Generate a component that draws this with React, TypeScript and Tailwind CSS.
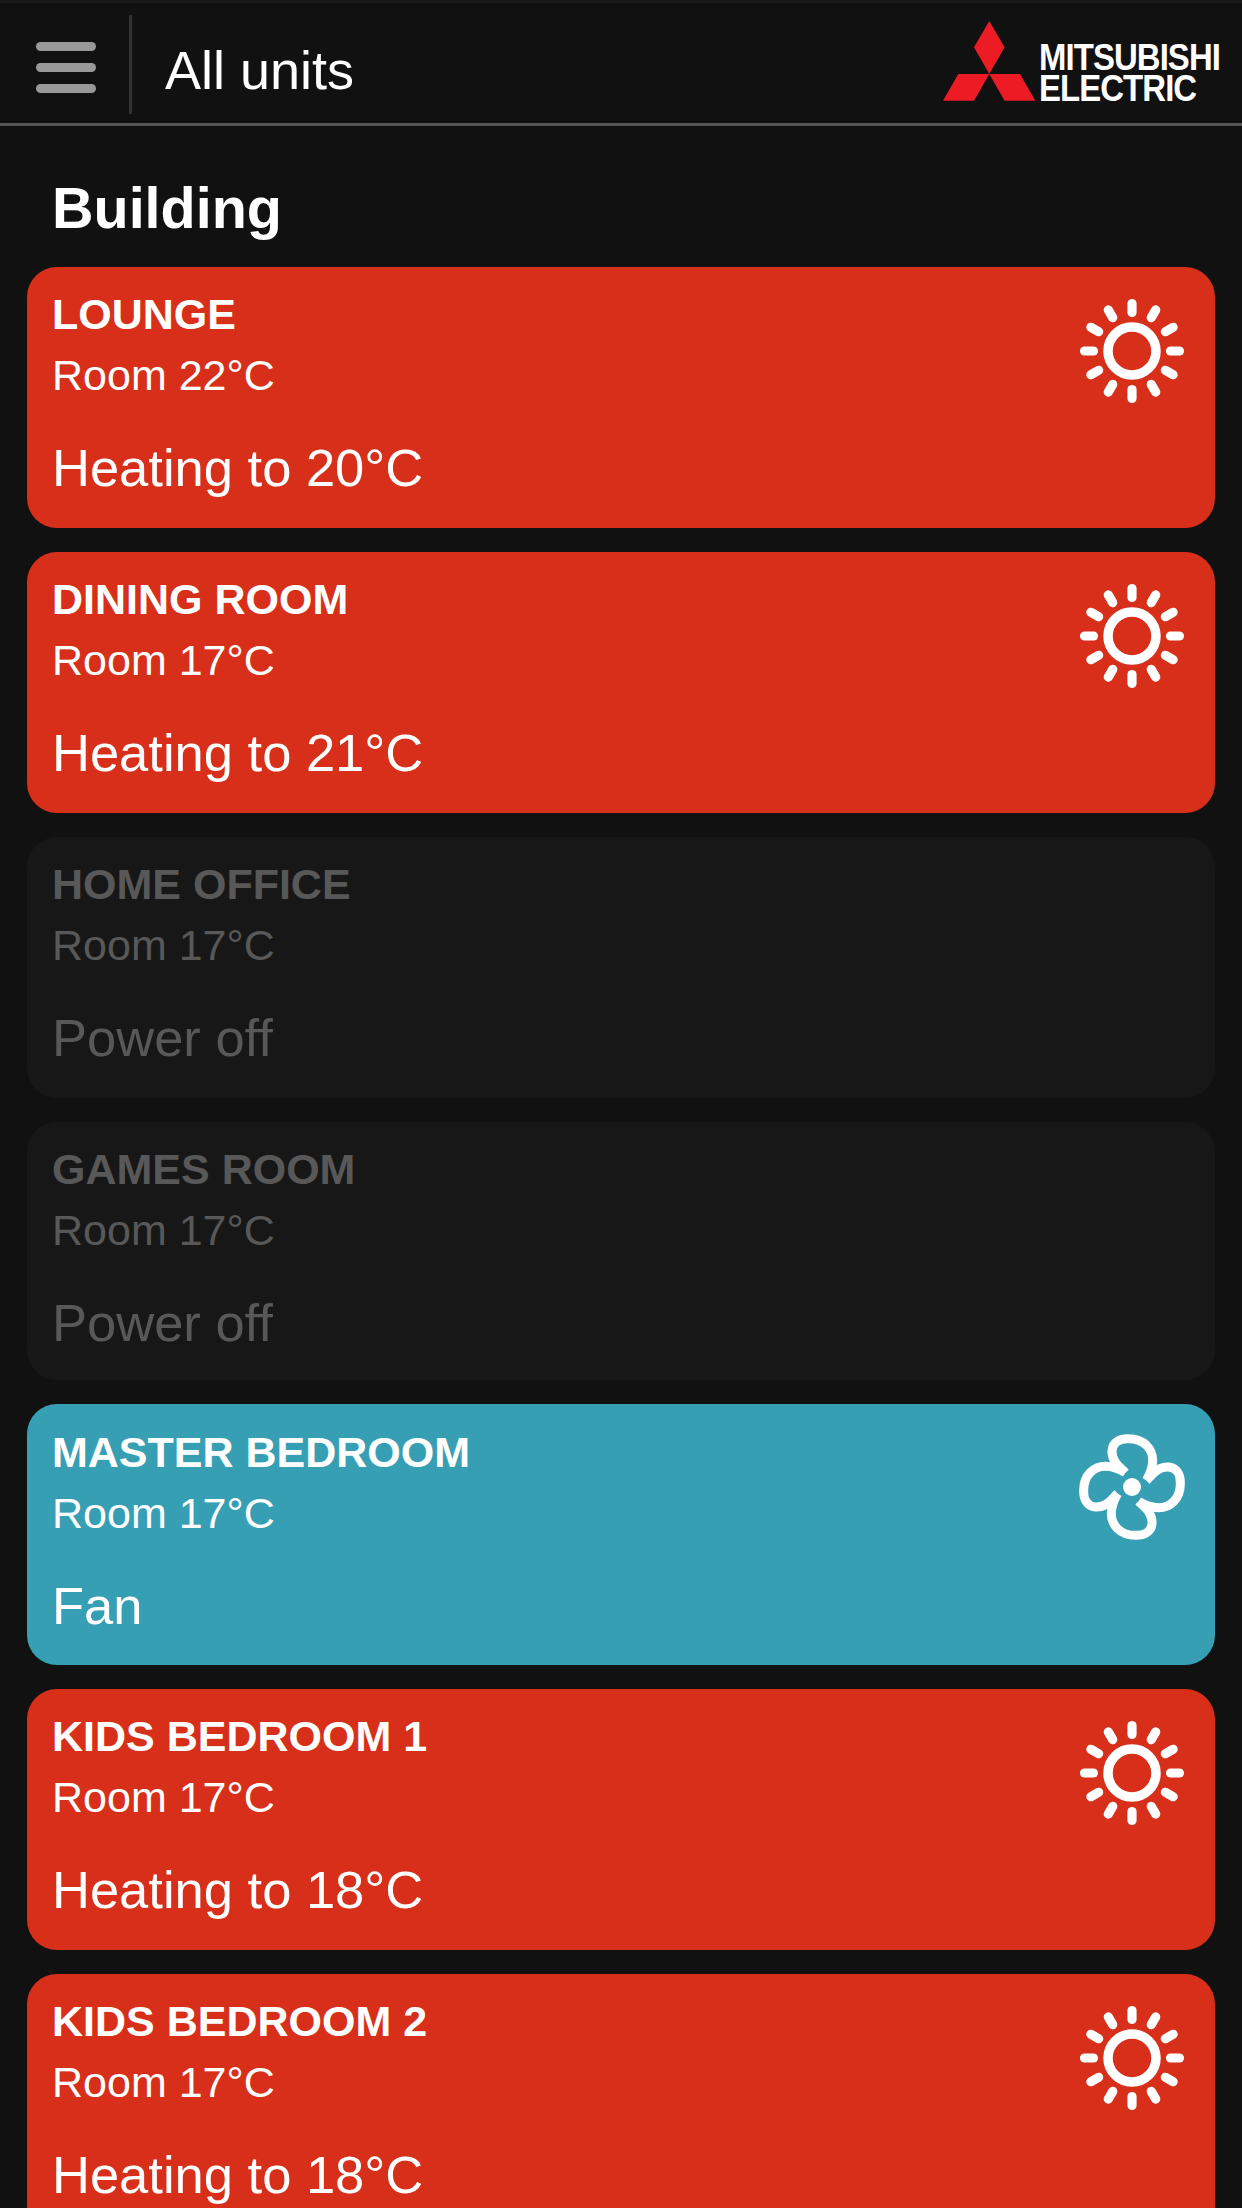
import React from 'react';

type Mode = 'heat' | 'off' | 'fan';

const units: { name: string; room: string; status: string; mode: Mode; short?: boolean }[] = [
  { name: 'LOUNGE', room: 'Room 22°C', status: 'Heating to 20°C', mode: 'heat' },
  { name: 'DINING ROOM', room: 'Room 17°C', status: 'Heating to 21°C', mode: 'heat' },
  { name: 'HOME OFFICE', room: 'Room 17°C', status: 'Power off', mode: 'off' },
  { name: 'GAMES ROOM', room: 'Room 17°C', status: 'Power off', mode: 'off', short: true },
  { name: 'MASTER BEDROOM', room: 'Room 17°C', status: 'Fan', mode: 'fan' },
  { name: 'KIDS BEDROOM 1', room: 'Room 17°C', status: 'Heating to 18°C', mode: 'heat' },
  { name: 'KIDS BEDROOM 2', room: 'Room 17°C', status: 'Heating to 18°C', mode: 'heat' },
];

const SunIcon = () => (
  <svg width="106" height="106" viewBox="-53 -53 106 106" fill="none" stroke="white" strokeLinecap="round">
    <circle r="24" strokeWidth="9.5" />
    {[0, 30, 60, 90, 120, 150, 180, 210, 240, 270, 300, 330].map((a) => (
      <line key={a} x1="0" y1="-38.5" x2="0" y2="-47.5" strokeWidth="9.2" transform={`rotate(${a})`} />
    ))}
  </svg>
);

const FanIcon = () => (
  <svg width="110" height="110" viewBox="-165 -165 330 330" fill="none" stroke="white">
    <circle r="27" fill="white" stroke="none" />
    {[0, 90, 180, 270].map((a) => (
      <path
        key={a}
        strokeWidth="27"
        strokeLinejoin="round"
        transform={`rotate(${a})`}
        d="M-20,-43 C-35,-60 -62,-75 -60,-110 C-58,-135 -35,-146 -10,-145 C35,-145 62,-115 62,-80 C62,-55 52,-35 43,-20"
      />
    ))}
  </svg>
);

const Logo = () => (
  <div className="flex items-end gap-[3px] mt-[-6px]">
    <svg width="93" height="80" viewBox="0 0 93 80" className="mb-[-1px]">
      <path fill="#ed1c24" d="M46.3 0 L61.6 26.3 L46.3 53 L31 26.3 Z M46.3 53 L31 79.7 L0 79.7 L15.3 53 Z M46.3 53 L77 53 L92.3 79.7 L61.6 79.7 Z" />
    </svg>
    <div className="w-[181px] flex flex-col font-bold text-white text-[36px] leading-[31.5px] tracking-[-1px] whitespace-nowrap origin-left scale-x-[0.914] mb-[-5px]">
      <span>MITSUBISHI</span>
      <span>ELECTRIC</span>
    </div>
  </div>
);

const UnitCard = ({ name, room, status, mode, short }: (typeof units)[number]) => {
  const bg = mode === 'heat' ? 'bg-[#d72f19]' : mode === 'fan' ? 'bg-[#379fb4]' : 'bg-[#171717]';
  const text = mode === 'off' ? 'text-[#585858]' : 'text-white';
  const pad = short ? 'pt-[17px] pb-[24px]' : mode === 'fan' ? 'pt-[18px] pb-[26px]' : 'pt-[17px] pb-[27px]';
  return (
    <div className={`flex justify-between rounded-[30px] pl-[25px] pr-[30px] ${pad} ${bg} ${text}`}>
      <div className="flex flex-col">
        <div className="text-[43px] leading-[61px] font-bold">{name}</div>
        <div className="text-[43px] leading-[61px]">{room}</div>
        <div className="text-[52.5px] leading-[66px] mt-[29px]">{status}</div>
      </div>
      {mode === 'heat' && (
        <div className="mt-[14px]">
          <SunIcon />
        </div>
      )}
      {mode === 'fan' && (
        <div className="mt-[10px] -mr-[2px]">
          <FanIcon />
        </div>
      )}
    </div>
  );
};

export default function App() {
  return (
    <div className="h-[2208px] overflow-hidden bg-[#111111] font-['Liberation_Sans',Arial,sans-serif]">
      {/* Header */}
      <header className="h-[126px] border-t-[3px] border-t-[#1a1a1a] border-b-[3px] border-b-[#555555] flex items-center justify-between pr-[22px]">
        <div className="flex items-center h-full">
          <button className="w-[129px] flex flex-col items-center gap-[12px] pl-[3px] mt-[9px]">
            <span className="block w-[60px] h-[9px] rounded-full bg-[#999999]" />
            <span className="block w-[60px] h-[9px] rounded-full bg-[#999999]" />
            <span className="block w-[60px] h-[9px] rounded-full bg-[#999999]" />
          </button>
          <div className="w-[3px] h-[99px] bg-[#333333] mt-[3px]" />
          <h1 className="ml-[33px] mt-[14px] text-[54px] leading-none text-white">All units</h1>
        </div>
        <Logo />
      </header>

      <h2 className="ml-[52px] mt-[49px] mb-[26px] text-[57.5px] leading-[66px] font-bold text-white">Building</h2>

      <div className="flex flex-col gap-[24px] px-[27px]">
        {units.map((u) => (
          <UnitCard key={u.name} {...u} />
        ))}
      </div>
    </div>
  );
}
